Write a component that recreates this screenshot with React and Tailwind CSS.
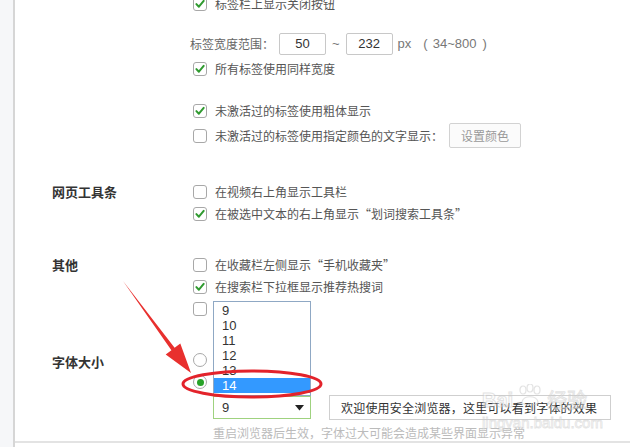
import React from "react";

// 选项页 - 标签 / 网页工具条 / 其他 / 字体大小
const FONT = { fontFamily: '"Liberation Sans", "Noto Sans CJK SC", sans-serif' };
const CJK = { fontFamily: '"Noto Sans CJK SC", "Liberation Sans", sans-serif' };

const Check = ({ checked }) => (
  <span className="w-[14px] h-[14px] rounded-[3px] border border-[#a8a8a8] bg-white flex items-center justify-center shrink-0">
    {checked && (
      <svg width="10" height="10" viewBox="0 0 10 10">
        <path d="M1.4 5.1 L3.9 7.7 L8.7 1.9" fill="none" stroke="#2f9a2f" strokeWidth="2" strokeLinecap="round" strokeLinejoin="round" />
      </svg>
    )}
  </span>
);

const Radio = ({ checked }) => (
  <span className="w-[14px] h-[14px] rounded-full border border-[#a8a8a8] bg-white flex items-center justify-center shrink-0">
    {checked && <span className="w-[7px] h-[7px] rounded-full bg-[#28a228]" />}
  </span>
);

const Row = ({ checked, children, className = "" }) => (
  <div className={`flex items-center h-[14px] ${className}`}>
    <Check checked={checked} />
    <span className="ml-[8px] text-[12px] leading-[14px] text-[#555] whitespace-nowrap" style={CJK}>{children}</span>
  </div>
);

const Label = ({ children, className = "" }) => (
  <div className={`w-[178px] pl-[37px] shrink-0 ${className}`}>
    <div className="h-[14px] flex items-center text-[13px] font-bold text-[#333] whitespace-nowrap" style={CJK}>{children}</div>
  </div>
);

const App = () => {
  const sizes = ["9", "10", "11", "12", "13", "14"];

  return (
    <div className="relative w-[630px] h-[447px] flex bg-white overflow-hidden" style={FONT}>
      {/* 左侧栏 */}
      <div className="w-[15px] h-full bg-[#f6f7f9] border-r-2 border-[#d6d6d6] shrink-0" />

      <div className="flex-1 flex flex-col">
        <div className="h-[441px] flex flex-col">
          {/* 标签 */}
          <div className="flex mt-[-3px]">
            <Label />
            <div className="flex flex-col">
              <Row checked>标签栏上显示关闭按钮</Row>
              <div className="flex items-center h-[22px] mt-[22px] ml-[-3px] text-[12px] text-[#666]">
                <span className="whitespace-nowrap" style={CJK}>标签宽度范围：</span>
                <span className="ml-[5px] w-[47px] h-[22px] border border-[#c8c8c8] rounded-[2px] flex items-center justify-center text-[13px] text-[#333]">50</span>
                <span className="ml-[6px] text-[13px] text-[#777]">~</span>
                <span className="ml-[6px] w-[47px] h-[22px] border border-[#c8c8c8] rounded-[2px] flex items-center justify-center text-[13px] text-[#333]">232</span>
                <span className="ml-[5px] text-[13px] text-[#777]">px</span>
                <span className="ml-[12px] text-[13px] text-[#777]">(</span>
                <span className="ml-[5px] text-[13px] text-[#777]">34~800</span>
                <span className="ml-[6px] text-[13px] text-[#777]">)</span>
              </div>
              <Row checked className="mt-[7px]">所有标签使用同样宽度</Row>
              <Row checked className="mt-[28px]">未激活过的标签使用粗体显示</Row>
              <div className="flex items-center h-[25px] mt-[5px]">
                <Check />
                <span className="ml-[8px] text-[12px] text-[#555] whitespace-nowrap" style={CJK}>未激活过的标签使用指定颜色的文字显示：</span>
                <button className="ml-[6px] w-[72px] h-[25px] border border-[#d2d2d2] bg-[#fbfbfb] rounded-[2px] text-[12px] text-[#999]" style={CJK}>设置颜色</button>
              </div>
            </div>
          </div>

          {/* 网页工具条 */}
          <div className="flex mt-[37px]">
            <Label>网页工具条</Label>
            <div className="flex flex-col">
              <Row>在视频右上角显示工具栏</Row>
              <Row checked className="mt-[8px]">在被选中文本的右上角显示“划词搜索工具条”</Row>
            </div>
          </div>

          {/* 其他 */}
          <div className="flex mt-[37px]">
            <Label>其他</Label>
            <div className="flex flex-col">
              <Row>在收藏栏左侧显示“手机收藏夹”</Row>
              <Row checked className="mt-[8px]">在搜索栏下拉框显示推荐热搜词</Row>
              <Row className="mt-[8px]" />
            </div>
          </div>

          {/* 字体大小 */}
          <div className="flex mt-[37px]">
            <Label className="mt-[2px]">字体大小</Label>
            <div className="flex flex-col">
              <div className="h-[14px] flex items-center"><Radio /></div>
              <div className="h-[14px] flex items-center mt-[8px]"><Radio checked /></div>
              <div className="flex items-center h-[25px] mt-[6px] ml-[20px]">
                <div className="w-[98px] h-[23px] border border-[#9fd27f] bg-white flex items-center justify-between pl-[8px] pr-[6px] text-[13px] text-[#333]">
                  <span>9</span>
                  <svg width="9" height="6" viewBox="0 0 9 6"><path d="M0 0 H9 L4.5 5.5 Z" fill="#222" /></svg>
                </div>
                <div className="ml-[18px] w-[282px] h-[25px] border border-[#cfcfcf] bg-white flex items-center pl-[11px] text-[12px] tracking-[0.2px] text-[#333] whitespace-nowrap" style={CJK}>
                  欢迎使用安全浏览器，这里可以看到字体的效果
                </div>
              </div>
              <div className="ml-[20px] mt-[6px] h-[14px] flex items-center text-[12px] text-[#bbb] whitespace-nowrap" style={CJK}>
                重启浏览器后生效，字体过大可能会造成某些界面显示异常
              </div>
            </div>
          </div>
        </div>
        <div className="h-[2px] bg-[#e3e3e3]" />
      </div>

      {/* 字号下拉列表 */}
      <div className="absolute left-[213px] top-[301px] w-[98px] h-[95px] border border-[#8fa8c4] bg-white pt-[1px]">
        {sizes.map((s) => (
          <div
            key={s}
            className={`h-[15px] pl-[8px] flex items-center text-[13px] ${s === "14" ? "bg-[#3399ff] text-white" : "text-[#333]"}`}
          >
            {s}
          </div>
        ))}
      </div>

      {/* 百度经验水印 */}
      <div className="absolute left-[482px] top-[384px] pointer-events-none opacity-50">
        <div className="flex items-end gap-[4px]">
          <span className="text-[20px] font-bold text-white leading-none" style={{ WebkitTextStroke: "1px #c8c8c8" }}>Bai</span>
          <svg width="26" height="24" viewBox="0 0 26 24" className="mb-[2px]">
            <g fill="none" stroke="#c8c8c8" strokeWidth="1.2">
              <ellipse cx="6" cy="6" rx="3" ry="4" />
              <ellipse cx="13" cy="4" rx="3" ry="4" />
              <ellipse cx="20" cy="6" rx="3" ry="4" />
              <path d="M5 18 C6 11 20 11 21 18 C21 22 5 22 5 18 Z" />
            </g>
          </svg>
          <span className="text-[20px] text-white leading-none" style={{ ...CJK, WebkitTextStroke: "1px #c8c8c8" }}>经验</span>
        </div>
        <div className="mt-[5px] text-[15px] text-white leading-none" style={{ WebkitTextStroke: "0.8px #c8c8c8" }}>jingyan.baidu.com</div>
      </div>

      {/* 红色箭头和圈 */}
      <svg className="absolute inset-0 pointer-events-none" width="630" height="447" viewBox="0 0 630 447">
        <polygon
          points="123,281 174.6,347.8 180.3,343.6 191,373 165.7,354.4 171.4,350.2"
          fill="#e8302e"
        />
        <ellipse cx="252" cy="384" rx="69" ry="13" fill="none" stroke="#e3232b" strokeWidth="3" />
      </svg>
    </div>
  );
};

export default App;
